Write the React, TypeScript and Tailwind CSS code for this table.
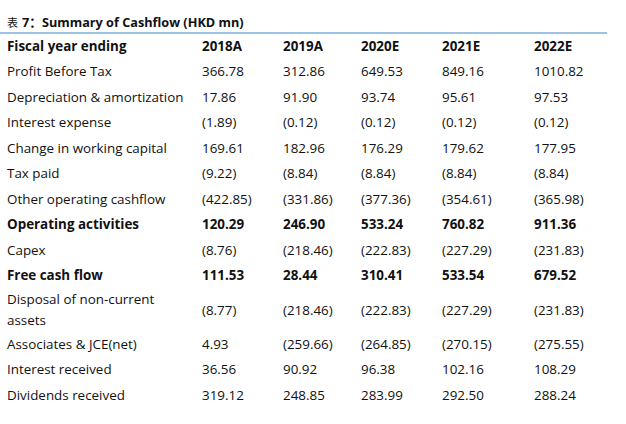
import React from "react";

type Row = {
  label: string;
  values: string[];
  bold?: boolean;
  tall?: boolean;
};

const years = ["2018A", "2019A", "2020E", "2021E", "2022E"];

const rows: Row[] = [
  { label: "Profit Before Tax", values: ["366.78", "312.86", "649.53", "849.16", "1010.82"] },
  { label: "Depreciation & amortization", values: ["17.86", "91.90", "93.74", "95.61", "97.53"] },
  { label: "Interest expense", values: ["(1.89)", "(0.12)", "(0.12)", "(0.12)", "(0.12)"] },
  { label: "Change in working capital", values: ["169.61", "182.96", "176.29", "179.62", "177.95"] },
  { label: "Tax paid", values: ["(9.22)", "(8.84)", "(8.84)", "(8.84)", "(8.84)"] },
  { label: "Other operating cashflow", values: ["(422.85)", "(331.86)", "(377.36)", "(354.61)", "(365.98)"] },
  { label: "Operating activities", values: ["120.29", "246.90", "533.24", "760.82", "911.36"], bold: true },
  { label: "Capex", values: ["(8.76)", "(218.46)", "(222.83)", "(227.29)", "(231.83)"] },
  { label: "Free cash flow", values: ["111.53", "28.44", "310.41", "533.54", "679.52"], bold: true },
  { label: "Disposal of non-current assets", values: ["(8.77)", "(218.46)", "(222.83)", "(227.29)", "(231.83)"], tall: true },
  { label: "Associates & JCE(net)", values: ["4.93", "(259.66)", "(264.85)", "(270.15)", "(275.55)"] },
  { label: "Interest received", values: ["36.56", "90.92", "96.38", "102.16", "108.29"] },
  { label: "Dividends received", values: ["319.12", "248.85", "283.99", "292.50", "288.24"] },
];

const grid = "grid grid-cols-[195px_81px_78px_81px_92px_73px] items-center pl-[7px] text-[13.4px]";

export default function App() {
  return (
    <div className="w-[626px] h-[424px] bg-white text-[#111] font-['Open_Sans','Noto_Sans_CJK_SC',sans-serif]">
      <div className="pt-[14px] w-[607px]">
        <div className="px-[7px] text-[12.7px] leading-[16px] font-bold flex items-center">
          <span className="font-normal font-['Noto_Sans_CJK_SC',sans-serif] text-[11px] mr-[4px]">表</span>
          <span>7：Summary of Cashflow (HKD mn)</span>
        </div>
        <div className="mt-[2px] h-[2px] bg-[#9cc2e5]" />

        <div className={`${grid} font-bold leading-[21px] py-[2px]`}>
          <div>Fiscal year ending</div>
          {years.map((y) => (
            <div key={y}>{y}</div>
          ))}
        </div>

        {rows.map((r) => (
          <div
            key={r.label}
            className={`${grid} ${r.tall ? "leading-[21px] py-[0.5px]" : "leading-[21.5px] py-[2px]"} ${r.bold ? "font-bold" : ""}`}
          >
            <div className={r.tall ? "w-[170px]" : ""}>{r.label}</div>
            {r.values.map((v, i) => (
              <div key={i}>{v}</div>
            ))}
          </div>
        ))}
      </div>
    </div>
  );
}
